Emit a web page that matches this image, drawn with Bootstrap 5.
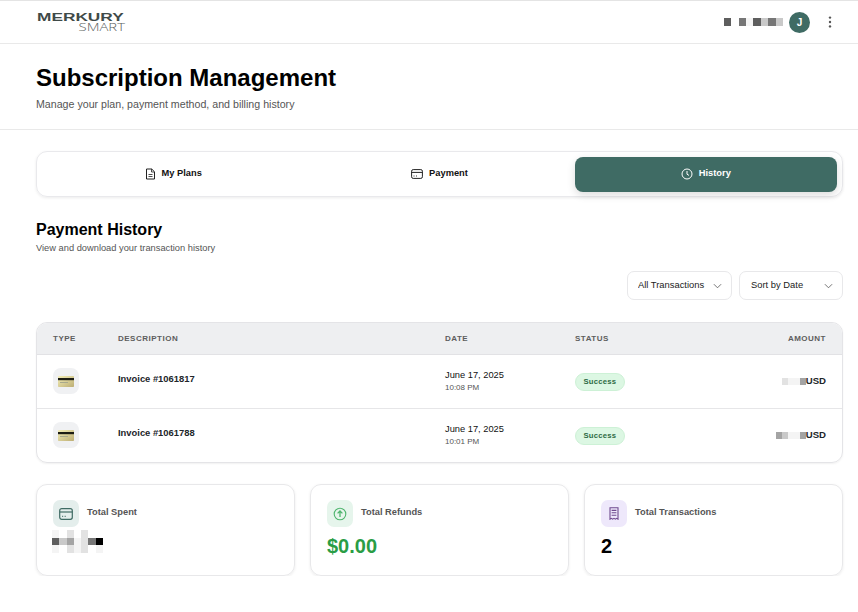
<!DOCTYPE html>
<html lang="en">
<head>
    <meta charset="UTF-8">
    <meta name="viewport" content="width=device-width, initial-scale=1.0">
    <title>Subscription Management</title>
    <link href="https://cdn.jsdelivr.net/npm/bootstrap@5.3.0/dist/css/bootstrap.min.css" rel="stylesheet">
    <style>
        body { font-family: "Liberation Sans", Arial, sans-serif; color: #000; background: #fff; border-top: 1px solid #e4e4e4; }
        .top-bar { height: 43px; border-bottom: 1px solid #e9e9e9; padding: 0 17px 0 37px; }
        .logo-box { width: 88px; }
        .logo-top { display: block; font-size: 11px; line-height: 10px; font-weight: 700; color: #3f4a48; transform-origin: left; transform: scaleX(1.57); height: 10px; }
        .logo-bottom { display: block; font-size: 11px; line-height: 10px; color: #5a6160; text-align: right; height: 10px; font-family: "Open Sans", sans-serif; font-weight: 300; transform-origin: right; transform: scaleX(1.35); }
        .pix-row { display: flex; margin-right: 6px; }
        .pix-row i { display: block; height: 8px; width: 7.4px; }
        .amount-pix i { display: block; height: 7px; width: 6px; }
        .user-dot { width: 21px; height: 21px; border-radius: 50%; background: #3f6b64; color: #fff; font-size: 10px; font-weight: 700; }
        .dots-btn { width: 40px; margin-right: -9px; }
        .page-head { height: 86px; border-bottom: 1px solid #e9e9e9; padding: 20px 36px 0; }
        .page-head h1 { font-size: 24px; font-weight: 700; line-height: 28px; margin: 0 0 5px; }
        .page-head p { font-size: 10.65px; color: #555; line-height: 14px; margin: 0; }
        .main-area { padding: 21px 15px 0 36px; }
        .tab-shell { height: 46px; padding: 5px; gap: 4px; border: 1px solid #e9e9ec; border-radius: 11px; box-shadow: 0 1px 3px rgba(0,0,0,.08); }
        .tab-shell .nav-link { flex: 1 1 0; height: 35px; display: flex; align-items: center; justify-content: center; gap: 6px; padding: 0 0 1px; border-radius: 8px; color: #111; font-size: 9.3px; font-weight: 700; }
        .tab-shell .nav-link.active { background: #3f6b64; color: #fff; box-shadow: 0 3px 8px rgba(0,0,0,.14); }
        .section-title { font-size: 16px; font-weight: 700; line-height: 20px; margin: 23px 0 2px; }
        .section-sub { font-size: 9.3px; color: #555; line-height: 12px; margin: 0; }
        .filter-row { gap: 7px; margin-top: 17px; }
        .filter-row .form-select { height: 29px; font-size: 9.4px; color: #222; border: 1px solid #e8e8ea; border-radius: 7px; padding: 0 0 0 10px; background-image: url("data:image/svg+xml,%3csvg xmlns='http://www.w3.org/2000/svg' viewBox='0 0 10 6'%3e%3cpath fill='none' stroke='%23555' stroke-width='.9' d='M1 1l4 4 4-4'/%3e%3c/svg%3e"); background-size: 9px 6px; background-position: right 9px center; }
        .filter-one { width: 105px; }
        .filter-two { width: 104px; padding-left: 11px !important; }
        .history-box { margin-top: 22px; border: 1px solid #e4e4e7; border-radius: 11px; overflow: hidden; box-shadow: 0 1px 2px rgba(0,0,0,.06); }
        .history-box table { margin: 0; table-layout: fixed; }
        .history-box th { height: 31px; background: #eeeff1; color: #5d5d5d; font-size: 8px; font-weight: 700; letter-spacing: .5px; padding: 1px 16px 0; vertical-align: middle; border-bottom: 1px solid #e2e2e5; }
        .history-box td { height: 54px; padding: 0 16px; vertical-align: middle; border-bottom: 1px solid #e6e6e8; }
        .history-box tr:last-child td { border-bottom: 0; }
        .col-type { width: 65px; }
        .col-desc { width: 327px; }
        .col-date { width: 130px; }
        .col-status { width: 130px; }
        .type-icon { width: 26px; height: 26px; background: #f0f1f3; border-radius: 8px; }
        .invoice-name { font-size: 9.4px; font-weight: 700; position: relative; top: -4px; }
        .date-main { font-size: 9.3px; line-height: 12px; color: #111; }
        .date-time { font-size: 8px; line-height: 12px; color: #555; margin-top: 1px; }
        .ok-pill { display: inline-block; vertical-align: middle; height: 18px; line-height: 16px; padding: 0 7.5px; border-radius: 9px; background: #dcf7e3; border: 1px solid #cdf1d6; color: #2d6a43; font-size: 7.7px; font-weight: 700; letter-spacing: .2px; }
        .amount-cell { font-size: 9.6px; font-weight: 700; position: relative; top: -2px; }
        .amount-pix { display: inline-flex; vertical-align: middle; }
        .stat-row { gap: 15px; margin-top: 21px; }
        .stat-box { flex: 1 1 0; height: 92px; padding: 15px 16px; border: 1px solid #e8e8ea; border-radius: 11px; box-shadow: 0 1px 3px rgba(0,0,0,.08); }
        .stat-icon { width: 26px; height: 27px; border-radius: 7px; }
        .icon-teal { background: #e4eeec; }
        .icon-green { background: #e6f5ec; }
        .icon-purple { background: #eee8fb; }
        .stat-label { font-size: 9.3px; font-weight: 700; color: #555; margin-left: 8px; position: relative; top: -1px; }
        .stat-value { font-size: 20px; font-weight: 700; line-height: 24px; margin-top: 7px; }
        .stat-green { color: #2a9d45; }
        .spent-pix { display: flex; margin: 3px 0 0 -1px; height: 23px; align-items: stretch; }
        .spent-pix div { width: 7.3px; display: flex; flex-direction: column; }
        .spent-pix i { display: block; height: 7.6px; }
        .s0 { background: #fff; } .s1 { background: #f4f4f4; } .s2 { background: #e2e2e2; } .s3 { background: #c9c9c9; }
        .s4 { background: #a4a4a4; } .s5 { background: #767676; } .s6 { background: #5e5e5e; } .s7 { background: #000; }
    </style>
</head>
<body>
    <header class="top-bar d-flex align-items-center justify-content-between">
        <div class="logo-box">
            <span class="logo-top">MERKURY</span>
            <span class="logo-bottom">SMART</span>
        </div>
        <div class="d-flex align-items-center">
            <div class="pix-row"><i class="s6"></i><i class="s0"></i><i class="s5"></i><i class="s1"></i><i class="s6"></i><i class="s3"></i><i class="s5"></i><i class="s3"></i></div>
            <div class="user-dot d-flex align-items-center justify-content-center">J</div>
            <div class="dots-btn d-flex justify-content-center">
                <svg width="4" height="12" viewBox="0 0 4 12"><circle cx="2" cy="1.6" r="1.2" fill="#555"/><circle cx="2" cy="6" r="1.2" fill="#555"/><circle cx="2" cy="10.4" r="1.2" fill="#555"/></svg>
            </div>
        </div>
    </header>

    <section class="page-head">
        <h1>Subscription Management</h1>
        <p>Manage your plan, payment method, and billing history</p>
    </section>

    <main class="main-area">
        <nav class="nav tab-shell">
            <a class="nav-link" href="#">
                <svg width="11" height="12" viewBox="0 0 11 12" fill="none" stroke="#222" stroke-width="1"><path d="M1.5 1h5.2L9.5 3.8V11h-8z"/><path d="M6.5 1v3h3M3.5 6.5h4M3.5 8.5h4" stroke-width=".8"/></svg>
                My Plans
            </a>
            <a class="nav-link" href="#">
                <svg width="12" height="10" viewBox="0 0 12 10" fill="none" stroke="#222" stroke-width="1"><rect x=".6" y=".6" width="10.8" height="8.8" rx="1.6"/><path d="M.6 3.4h10.8"/><path d="M2.5 7h1M5 7h1" stroke-width=".9"/></svg>
                Payment
            </a>
            <a class="nav-link active" href="#">
                <svg width="12" height="12" viewBox="0 0 12 12" fill="none" stroke="#fff" stroke-width="1"><circle cx="6" cy="6" r="5"/><path d="M6 3v3.2l2 1.2"/></svg>
                History
            </a>
        </nav>

        <h2 class="section-title">Payment History</h2>
        <p class="section-sub">View and download your transaction history</p>

        <div class="filter-row d-flex justify-content-end">
            <select class="form-select filter-one"><option>All Transactions</option></select>
            <select class="form-select filter-two"><option>Sort by Date</option></select>
        </div>

        <div class="history-box">
            <table class="table">
                <thead>
                    <tr>
                        <th class="col-type">TYPE</th>
                        <th class="col-desc">DESCRIPTION</th>
                        <th class="col-date">DATE</th>
                        <th class="col-status">STATUS</th>
                        <th class="text-end">AMOUNT</th>
                    </tr>
                </thead>
                <tbody>
                    <tr>
                        <td><div class="type-icon d-flex align-items-center justify-content-center">
                            <svg width="16" height="11" viewBox="0 0 16 11"><defs><linearGradient id="goldA" x1="0" y1="0" x2="1" y2="1"><stop offset="0" stop-color="#f4efb8"/><stop offset="1" stop-color="#bdae74"/></linearGradient></defs><rect width="16" height="11" rx=".8" fill="url(#goldA)"/><rect y="2" width="16" height="2.2" fill="#1c1c14"/><rect x="2" y="6" width="8" height="1" fill="#a9a98c"/></svg>
                        </div></td>
                        <td><span class="invoice-name">Invoice #1061817</span></td>
                        <td><div class="date-main">June 17, 2025</div><div class="date-time">10:08 PM</div></td>
                        <td><span class="ok-pill">Success</span></td>
                        <td class="text-end"><span class="amount-cell"><span class="amount-pix"><i class="s2"></i><i class="s1"></i><i class="s1"></i><i class="s4"></i></span>USD</span></td>
                    </tr>
                    <tr>
                        <td><div class="type-icon d-flex align-items-center justify-content-center">
                            <svg width="16" height="11" viewBox="0 0 16 11"><defs><linearGradient id="goldB" x1="0" y1="0" x2="1" y2="1"><stop offset="0" stop-color="#f4efb8"/><stop offset="1" stop-color="#bdae74"/></linearGradient></defs><rect width="16" height="11" rx=".8" fill="url(#goldB)"/><rect y="2" width="16" height="2.2" fill="#1c1c14"/><rect x="2" y="6" width="8" height="1" fill="#a9a98c"/></svg>
                        </div></td>
                        <td><span class="invoice-name">Invoice #1061788</span></td>
                        <td><div class="date-main">June 17, 2025</div><div class="date-time">10:01 PM</div></td>
                        <td><span class="ok-pill">Success</span></td>
                        <td class="text-end"><span class="amount-cell"><span class="amount-pix"><i class="s4"></i><i class="s3"></i><i class="s1"></i><i class="s1"></i><i class="s4"></i></span>USD</span></td>
                    </tr>
                </tbody>
            </table>
        </div>

        <div class="stat-row d-flex">
            <div class="stat-box">
                <div class="d-flex align-items-center">
                    <div class="stat-icon icon-teal d-flex align-items-center justify-content-center">
                        <svg width="14" height="12" viewBox="0 0 14 12" fill="none" stroke="#3f6b64" stroke-width="1.2"><rect x=".7" y=".7" width="12.6" height="10.6" rx="2"/><path d="M.7 4h12.6"/><path d="M3 8.3h1.2M5.6 8.3h1.2" stroke-width="1"/></svg>
                    </div>
                    <span class="stat-label">Total Spent</span>
                </div>
                <div class="spent-pix">
                    <div><i class="s1"></i><i class="s6"></i><i class="s1"></i></div>
                    <div><i class="s0"></i><i class="s3"></i><i class="s0"></i></div>
                    <div><i class="s2"></i><i class="s4"></i><i class="s2"></i></div>
                    <div><i class="s0"></i><i class="s1"></i><i class="s1"></i></div>
                    <div><i class="s2"></i><i class="s2"></i><i class="s2"></i></div>
                    <div><i class="s0"></i><i class="s5"></i><i class="s0"></i></div>
                    <div><i class="s0"></i><i class="s7"></i><i class="s1"></i></div>
                </div>
            </div>
            <div class="stat-box">
                <div class="d-flex align-items-center">
                    <div class="stat-icon icon-green d-flex align-items-center justify-content-center">
                        <svg width="14" height="14" viewBox="0 0 14 14" fill="none" stroke="#4fb56e" stroke-width="1.1"><circle cx="7" cy="7" r="5.8"/><path d="M7 10V4.2M4.6 6.4L7 4l2.4 2.4" stroke-width="1.3"/></svg>
                    </div>
                    <span class="stat-label">Total Refunds</span>
                </div>
                <div class="stat-value stat-green">$0.00</div>
            </div>
            <div class="stat-box">
                <div class="d-flex align-items-center">
                    <div class="stat-icon icon-purple d-flex align-items-center justify-content-center">
                        <svg width="10" height="13" viewBox="0 0 10 13" fill="none" stroke="#6f4a8e" stroke-width="1.1"><path d="M1 .8h8v11.4l-1.3-.9-1.3.9-1.4-.9-1.4.9-1.3-.9-1.3.9z"/><path d="M2.6 3.4h4.8M2.6 5.8h4.8M2.6 8.2h4.8"/></svg>
                    </div>
                    <span class="stat-label">Total Transactions</span>
                </div>
                <div class="stat-value">2</div>
            </div>
        </div>
    </main>
</body>
</html>
